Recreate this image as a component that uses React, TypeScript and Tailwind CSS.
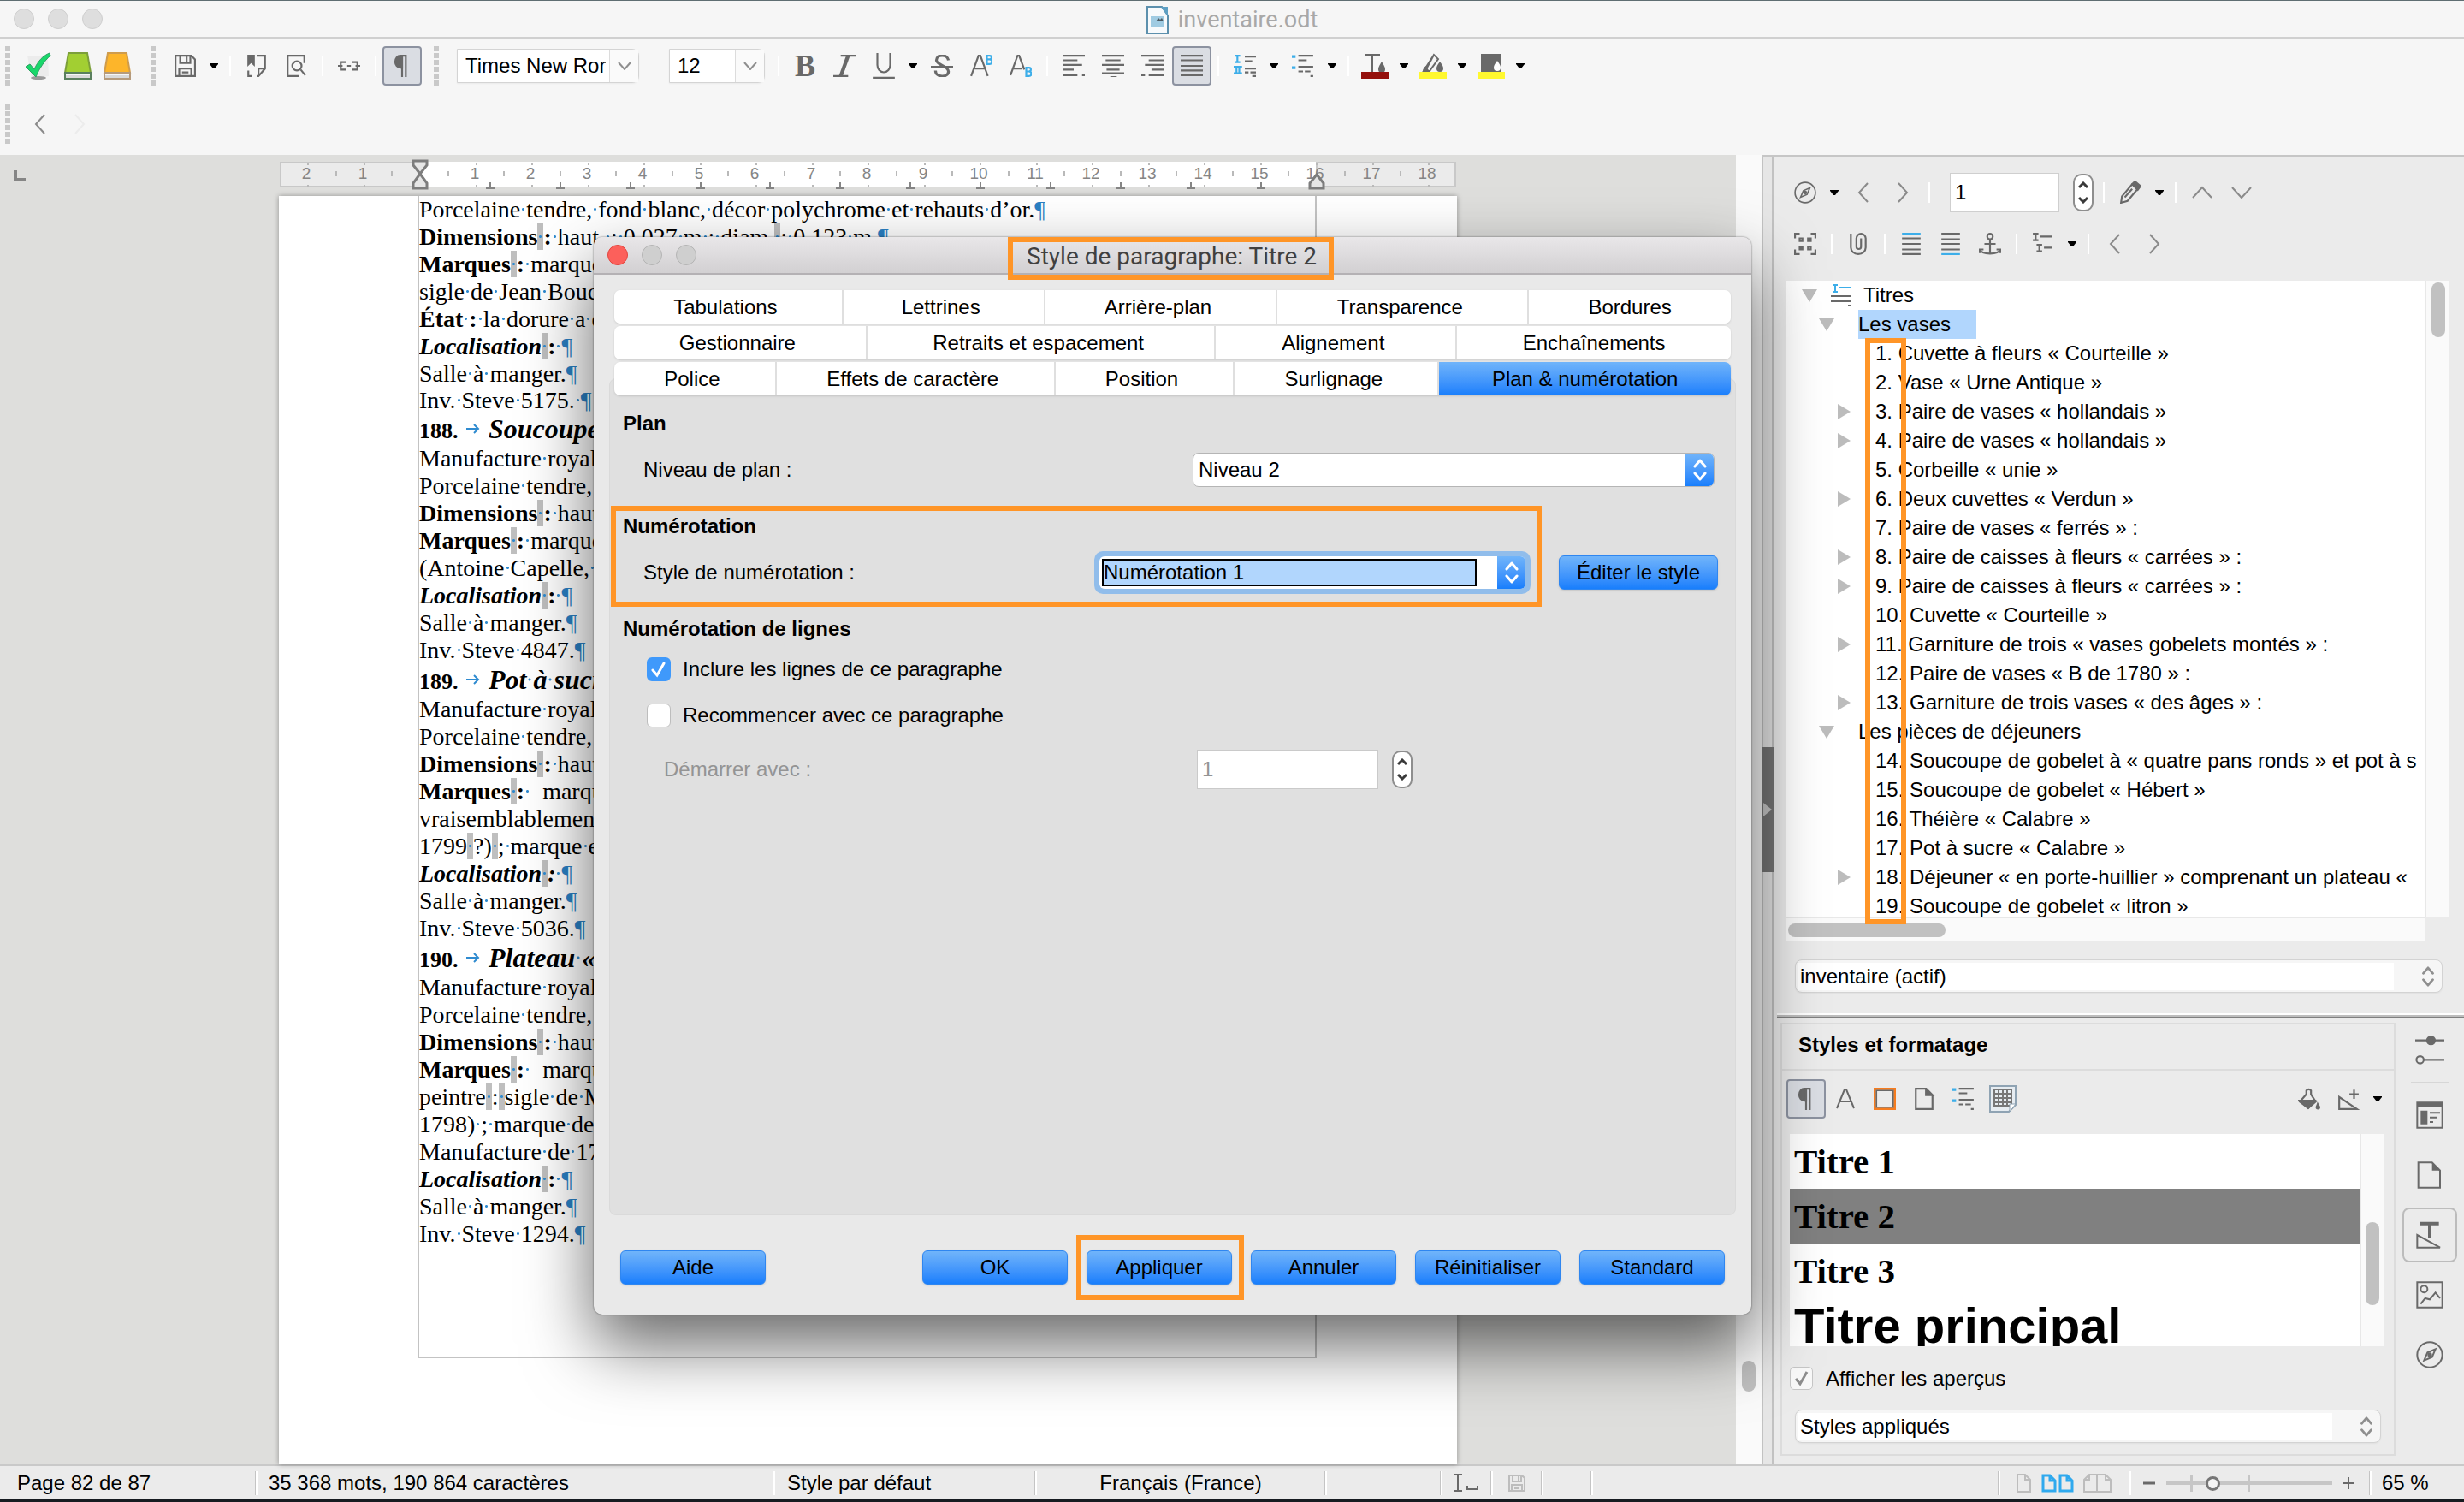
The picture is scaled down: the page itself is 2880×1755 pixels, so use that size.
import React, { type ReactNode } from "react";

const INK = "#696969";
const BLUE = "#3daee9";

/* ---------- small building blocks ---------- */

function Icon({ children, size = 26 }: { children: ReactNode; size?: number }) {
  return (
    <svg width={size} height={size} viewBox="0 0 24 24" fill="none" stroke={INK} strokeWidth="2" aria-hidden="true">
      {children}
    </svg>
  );
}

function Tool({ label, active, children }: { label: string; active?: boolean; children: ReactNode }) {
  return (
    <button
      type="button"
      aria-label={label}
      className={
        active
          ? "flex h-[46px] w-[46px] shrink-0 items-center justify-center rounded-[4px] border-2 border-[#8c92a0] bg-[#dadde3]"
          : "flex h-[46px] w-[46px] shrink-0 items-center justify-center"
      }
    >
      {children}
    </button>
  );
}

function Caret() {
  return (
    <button type="button" aria-label="Plus d’options" className="flex h-[46px] w-[22px] shrink-0 items-center justify-center">
      <svg width="10" height="6" viewBox="0 0 10 6" aria-hidden="true">
        <path d="M0 0h10v1L6 6H4L0 1z" fill="#000" />
      </svg>
    </button>
  );
}

function Sep() {
  return (
    <span className="flex w-[16px] shrink-0 justify-center">
      <span className="h-[24px] w-[2px] bg-white" />
    </span>
  );
}

function Handle({ className }: { className: string }) {
  return (
    <span className={className}>
      <svg width="6" height="46" viewBox="0 0 6 46" aria-hidden="true">
        {[0, 8, 16, 24, 32, 40].map((y) => (
          <rect key={y} x="0" y={y} width="6" height="6" fill="#c9c9c9" />
        ))}
      </svg>
    </span>
  );
}

function Chevron({ d, color = "#8a8a8a" }: { d: "left" | "right" | "up" | "down"; color?: string }) {
  const paths = {
    left: "M17 1 7 12l10 11",
    right: "M7 1l10 11L7 23",
    up: "M1 18 12 6l11 12",
    down: "M1 6l11 12L23 6",
  };
  return (
    <svg width="24" height="24" viewBox="0 0 24 24" fill="none" stroke={color} strokeWidth="2" aria-hidden="true">
      <path d={paths[d]} />
    </svg>
  );
}

function UpDown({ color, className }: { color: string; className?: string }) {
  return (
    <svg className={className} width="16" height="28" viewBox="0 0 16 28" fill="none" stroke={color} strokeWidth="3" strokeLinejoin="round" strokeLinecap="round" aria-hidden="true">
      <path d="M2 10l6-7 6 7M2 18l6 7 6-7" />
    </svg>
  );
}

function Spinner() {
  return (
    <button type="button" aria-label="Augmenter ou diminuer" className="flex h-[44px] w-[24px] items-center justify-center rounded-[10px] border-2 border-[#8e8e8e] bg-white">
      <svg width="12" height="26" viewBox="0 0 12 26" fill="none" stroke="#3a3a3a" strokeWidth="3" aria-hidden="true">
        <path d="M1 7l5-5 5 5M1 19l5 5 5-5" />
      </svg>
    </button>
  );
}

/* ---------- drawings ---------- */

const Pilcrow = () => (
  <Icon>
    <path d="M11 1h6M12 1v23M16 1v23" />
    <path d="M12 1H10a5 6 0 0 0 0 13h2z" fill={INK} />
  </Icon>
);
const Floppy = () => (
  <Icon>
    <path d="M2 1h17l4 4v18H2zM7 1v8h11V1M14 2v6M6 23v-8h13v8M9 19h7" />
  </Icon>
);
const PageIcon = ({ size = 26 }: { size?: number }) => (
  <Icon size={size}>
    <path d="M3 1h11l7 7v15H3z" />
    <path d="M14 1v7h7z" fill={INK} />
  </Icon>
);
const Lines = ({ d }: { d: string }) => (
  <Icon>
    <path d={d} />
  </Icon>
);
const Bullets = () => (
  <Icon>
    <path d="M7 1h16M7 6h9M7 13h16M7 18h5M14 18h6M20 23h3" />
    <path d="M0 2h4M0 14h4" stroke={BLUE} strokeWidth="3" />
  </Icon>
);
const NumList = () => (
  <Icon>
    <path d="M12 2h12M12 7h8M12 15h12M12 19h4M18 19h6M20 23h4" />
    <path d="M1 1h6M4 1v7M1 8h6M0 13h9M0 20h9M3 13v7M6 13v7" stroke={BLUE} />
  </Icon>
);
const Compass = ({ size = 26 }: { size?: number }) => (
  <Icon size={size}>
    <circle cx="12" cy="12" r="11" strokeWidth="1.5" />
    <path d="M17 7l-3 7-7 3 3-7z" strokeWidth="1.5" />
    <circle cx="12" cy="12" r="2" fill={INK} stroke="none" />
  </Icon>
);

/* ---------- title bar and toolbars ---------- */

function TitleBar() {
  return (
    <header className="flex h-[44px] items-center border-b-2 border-[#d0d0d0] bg-[#f6f6f6] px-[16px]">
      <div className="flex flex-1 gap-[16px]">
        {["Fermer", "Réduire", "Agrandir"].map((l) => (
          <button key={l} type="button" aria-label={l} className="h-[24px] w-[24px] rounded-full border border-[#cfcfcf] bg-[#dedede]" />
        ))}
      </div>
      <div className="flex items-center gap-[11px] pt-[2px]">
        <svg width="26" height="33" viewBox="0 0 26 33" aria-hidden="true">
          <path d="M1 1h17l7 10v21H1z" fill="#f7fafc" stroke="#5c90ad" strokeWidth="2" />
          <path d="M17 1h8v11z" fill="#5ea0c4" />
          <rect x="5" y="12" width="15" height="12" fill="#9fcbe2" />
          <path d="M11 18l3-4 2 2 2-2 2 4z" fill="#4c5a62" />
        </svg>
        <h1 className="font-[Roboto,sans-serif] text-[27px] leading-[32px] text-[#a8a8a8]">inventaire.odt</h1>
      </div>
      <div className="flex-1" />
    </header>
  );
}

function Combo({ label, value, className }: { label: string; value: string; className: string }) {
  return (
    <div className={className}>
      <input aria-label={label} defaultValue={value} className="h-full min-w-0 flex-1 bg-white pr-[4px] pl-[9px] text-[24px] outline-none" />
      <button type="button" aria-label={"Ouvrir " + label} className="flex w-[34px] items-center justify-center border-l border-[#dcdcdc] bg-[#fafafa]">
        <svg width="16" height="10" viewBox="0 0 16 10" fill="none" stroke="#8f8f8f" strokeWidth="2" aria-hidden="true">
          <path d="M1 1l7 8 7-8" />
        </svg>
      </button>
    </div>
  );
}

function Toolbars() {
  return (
    <div className="bg-[#f6f6f6]">
      <div className="flex h-[64px] items-center">
        <Handle className="flex w-[22px] shrink-0 pl-[6px]" />
        <Tool label="Vérifier">
          <svg width="34" height="34" viewBox="0 0 34 34" aria-hidden="true">
            <path d="M4 5l24 1 1 23-20 3z" fill="#ececec" />
            <ellipse cx="17" cy="31" rx="9" ry="2" fill="#9a9a9a" />
            <path d="M2 18l5-3 5 6C16 12 22 5 30 2l1 3C24 11 18 20 14 30z" fill="#19d76a" stroke="#2e9f64" />
          </svg>
        </Tool>
        {[
          ["#a2cf32", "#7c9f3a", "#5a7f5e"],
          ["#fdb52a", "#cf9c4c", "#b59a7b"],
        ].map(([fill, edge, base]) => (
          <Tool key={fill} label="Dictionnaire">
            <svg width="34" height="34" viewBox="0 0 34 34" aria-hidden="true">
              <path d="M6 2h22l4 23H2z" fill={fill} stroke={edge} strokeWidth="2" />
              <path d="M2 25h30v7H2z" fill="#d9d9d9" stroke={base} strokeWidth="2" />
              <path d="M3 27h28" stroke="#f6f6f6" strokeWidth="2" />
            </svg>
          </Tool>
        ))}
        <Handle className="flex w-[33px] shrink-0 pl-[16px]" />
        <Tool label="Enregistrer"><Floppy /></Tool>
        <Caret />
        <Sep />
        <Tool label="Exporter en PDF">
          <Icon>
            <path d="M12 1h9v14l-7 8h-2M7 23H3v-6M14 23v-8h7" />
            <path d="M2 0h8v13l-4-4-4 4z" fill={INK} stroke="none" />
          </Icon>
        </Tool>
        <Tool label="Aperçu">
          <Icon>
            <path d="M21 9V1H3v22h12" />
            <circle cx="13" cy="12" r="5" />
            <path d="M17 16l5 6" />
          </Icon>
        </Tool>
        <Sep />
        <Tool label="Hyperlien">
          <Icon>
            <path d="M9 8H3v3M9 16H3v-3M15 8h6v3M15 16h6v-3M0 12h5M19 12h5M10 12h4" />
          </Icon>
        </Tool>
        <Sep />
        <Tool label="Marques de formatage" active><Pilcrow /></Tool>
        <Handle className="flex w-[41px] shrink-0 pl-[14px]" />
        <Combo label="Nom de police" value="Times New Roman" className="flex h-[40px] w-[213px] rounded-r-[8px] border border-[#d4d4d4] bg-white shadow-xs" />
        <Combo label="Taille de police" value="12" className="ml-[35px] flex h-[40px] w-[112px] rounded-r-[8px] border border-[#d4d4d4] bg-white shadow-xs" />
        <span className="w-[8px]" />
        <Sep />
        <Tool label="Gras">
          <span className="font-['Liberation_Serif',serif] text-[36px] leading-[36px] font-bold text-[#696969]">B</span>
        </Tool>
        <Tool label="Italique">
          <Icon><path d="M8 1h16M0 23h16" strokeWidth="2" /><path d="M16 1 8 23" strokeWidth="4" /></Icon>
        </Tool>
        <Tool label="Souligné">
          <svg width="26" height="30" viewBox="0 0 24 28" fill="none" stroke={INK} strokeWidth="2" aria-hidden="true">
            <path d="M5 0v13a7 8 0 0 0 14 0V0M0 27h24" />
          </svg>
        </Tool>
        <Caret />
        <Tool label="Barré">
          <Icon><path d="M19 6c-1-7-13-7-13 0 0 5 13 6 13 12 0 7-14 7-14-1" strokeWidth="3" /><path d="M0 13h24" /></Icon>
        </Tool>
        <Tool label="Exposant">
          <Icon>
            <path d="M1 23 9 1h2l8 22M4 15h12" />
            <path d="M18 1h3a2 2 0 0 1 0 4 2 2 0 0 1 0 5h-3zM18 5h3" stroke={BLUE} />
          </Icon>
        </Tool>
        <Tool label="Indice">
          <Icon>
            <path d="M1 22 9 0h1l6 16M4 15h10" />
            <path d="M18 14h3a2 2 0 0 1 0 4 2 2 0 0 1 0 5h-3zM18 18h3" stroke={BLUE} />
          </Icon>
        </Tool>
        <Sep />
        <Tool label="Aligner à gauche"><Lines d="M0 1h24M0 6h16M0 11h21M0 16h12M0 22h16M21 22h3" /></Tool>
        <Tool label="Centrer"><Lines d="M0 1h24M4 6h16M0 11h24M5 16h14M0 20h24M9 24h7" /></Tool>
        <Tool label="Aligner à droite"><Lines d="M0 1h24M8 6h16M4 11h20M11 16h13M0 22h4M8 22h16" /></Tool>
        <Tool label="Justifier" active><Lines d="M0 1h24M0 6h24M0 12h24M0 17h24M0 22h24" /></Tool>
        <Sep />
        <Tool label="Numérotation"><NumList /></Tool>
        <Caret />
        <Tool label="Puces"><Bullets /></Tool>
        <Caret />
        <Sep />
        <Tool label="Couleur de police">
          <svg width="32" height="30" viewBox="0 0 32 30" aria-hidden="true">
            <path d="M4 2h18M13 2v20" stroke={INK} strokeWidth="2" />
            <path d="M24 10c3 5 4 7 4 9a4 4 0 0 1-8 0c0-2 1-4 4-9z" fill={INK} />
            <path d="M0 22h32v8H0z" fill="#94100c" />
          </svg>
        </Tool>
        <Caret />
        <Tool label="Surlignage">
          <svg width="32" height="30" viewBox="0 0 32 30" aria-hidden="true">
            <path d="M5 21 17 2l5 5-10 14zM17 2l-9 17" fill="none" stroke={INK} strokeWidth="2" />
            <path d="M4 22c0-4 2-6 4-7l4 7zM24 10c3 4 4 6 4 8a4 4 0 0 1-8 0c0-2 1-4 4-8z" fill={INK} />
            <path d="M0 22h32v8H0z" fill="#fff82f" />
          </svg>
        </Tool>
        <Caret />
        <Tool label="Couleur d’arrière-plan">
          <svg width="32" height="30" viewBox="0 0 32 30" aria-hidden="true">
            <path d="M4 1h24v21H4z" fill={INK} />
            <path d="M23 9c3 4 4 6 4 8a4 4 0 0 1-8 0c0-2 1-4 4-8z" fill="#fff" />
            <path d="M0 22h32v8H0z" fill="#fff82f" />
          </svg>
        </Tool>
        <Caret />
      </div>
      <div className="flex h-[72px] items-center">
        <Handle className="flex w-[24px] shrink-0 pl-[6px]" />
        <Tool label="Précédent"><Chevron d="left" /></Tool>
        <Tool label="Suivant"><Chevron d="right" color="#ececec" /></Tool>
      </div>
    </div>
  );
}

/* ---------- ruler and document ---------- */

function Ruler() {
  const x = (cm: number) => Math.round(165 + cm * 65.5);
  const labels = [-2, -1, ...Array.from({ length: 18 }, (_, i) => i + 1)];
  return (
    <svg width="1377" height="48" viewBox="0 0 1377 48" className="mx-auto block" aria-hidden="true">
      <path d="M165 8h1048v30H165z" fill="#fff" />
      <path d="M2 9h162v28H2zM1213 9h162v28h-162z" fill="#ebebeb" stroke="#c8c8c8" strokeWidth="2" />
      {labels.map((n) => (
        <g key={n}>
          <path d={`M${x(n)} 9v3M${x(n)} 35v3M${x(n < 0 ? n + 0.5 : n - 0.5)} 19v6`} stroke="#b9b9b9" strokeWidth="2" />
          <text x={x(n) - 2} y="28" textAnchor="middle" fontSize="19" fill="#858585" fontFamily="Liberation Sans, sans-serif">
            {Math.abs(n)}
          </text>
        </g>
      ))}
      {Array.from({ length: 12 }, (_, i) => (
        <path key={i} d={`M${x((i + 1) * 1.25)} 32v7M${x((i + 1) * 1.25) - 5} 39h10`} stroke="#858585" strokeWidth="2" />
      ))}
      <path d="M157 7h16v5l-8 10-8-10zM157 39h16v-6l-8-11-8 11zM1205 39h16v-6l-8-10-8 10z" fill="#e6e6e6" stroke="#7d7d7d" strokeWidth="3" />
    </svg>
  );
}

/* "·" is a marked space, "~" a marked non-breaking space, "¶" a paragraph end. */
function Marks({ text }: { text: string }) {
  return (
    <>
      {text.split(/([·~¶])/).map((part, i) => {
        if (part === "~")
          return <span key={i} className="bg-[#bfbfbf] bg-[radial-gradient(circle,#2f8bd0_1px,transparent_2px)]">{"\u00a0"}</span>;
        if (part === "·")
          return <span key={i} className="bg-[radial-gradient(circle,#2f8bd0_1px,transparent_2px)]"> </span>;
        if (part === "¶") return <span key={i} className="font-normal text-[#2a80c4] not-italic">¶</span>;
        return <React.Fragment key={i}>{part}</React.Fragment>;
      })}
    </>
  );
}

type Line = { n?: string; b?: string; i?: string; t?: string };

const paragraphs: Line[] = [
  { t: "Porcelaine·tendre,·fond·blanc,·décor·polychrome·et·rehauts·d’or.¶" },
  { b: "Dimensions~:", t: "·haut.·:·0,027·m·;·diam.~:·0,123·m.¶" },
  { b: "Marques~:", t: "·marque" },
  { t: "sigle·de·Jean·Boucher" },
  { b: "État·:", t: "·la·dorure·a·été" },
  { i: "Localisation~", b: ":·¶" },
  { t: "Salle·à·manger.¶" },
  { t: "Inv.·Steve·5175.·¶" },
  { n: "188.", t: "Soucoupe" },
  { t: "Manufacture·royale" },
  { t: "Porcelaine·tendre,·" },
  { b: "Dimensions~:", t: "·haut" },
  { b: "Marques~:", t: "·marque" },
  { t: "(Antoine·Capelle,·" },
  { i: "Localisation~", b: ":·¶" },
  { t: "Salle·à·manger.¶" },
  { t: "Inv.·Steve·4847.¶" },
  { n: "189.", t: "Pot·à·sucre" },
  { t: "Manufacture·royale" },
  { t: "Porcelaine·tendre,·" },
  { b: "Dimensions~:", t: "·haut" },
  { b: "Marques~:", t: "·  marque" },
  { t: "vraisemblablement" },
  { t: "1799~?)~;·marque·en" },
  { i: "Localisation~:", b: "·¶" },
  { t: "Salle·à·manger.¶" },
  { t: "Inv.·Steve·5036.¶" },
  { n: "190.", t: "Plateau·«" },
  { t: "Manufacture·royale" },
  { t: "Porcelaine·tendre,·" },
  { b: "Dimensions~:", t: "·haut" },
  { b: "Marques~:", t: "·  marque" },
  { t: "peintre~:~sigle·de·M" },
  { t: "1798)·;·marque·de" },
  { t: "Manufacture·de·1789" },
  { i: "Localisation~", b: ":·¶" },
  { t: "Salle·à·manger.¶" },
  { t: "Inv.·Steve·1294.¶" },
];

function Document() {
  return (
    <div className="flex min-w-0 flex-1">
      <div className="relative flex min-w-0 flex-1 flex-col bg-[#dededc]">
        <svg width="16" height="14" viewBox="0 0 16 14" className="absolute top-[18px] left-[16px]" aria-hidden="true">
          <path d="M2 0v11h12" fill="none" stroke="#858585" strokeWidth="4" />
        </svg>
        <div className="h-[48px]">
          <Ruler />
        </div>
        <main className="mx-auto w-[1377px] flex-1 bg-white shadow-[0_0_6px_rgba(0,0,0,0.35)]">
          <div className="mr-[164px] ml-[162px] overflow-hidden border-x-2 border-b-2 border-[#c3c3c3] pb-[127px] font-['Liberation_Serif',serif] text-[28px] leading-[32px] whitespace-pre">
            {paragraphs.map((l, k) =>
              l.n ? (
                <h2 key={k} className="flex h-[37px] items-baseline font-bold">
                  <span className="w-[55px] text-[26px]">{l.n}</span>
                  <svg width="16" height="14" viewBox="0 0 16 14" fill="none" stroke="#2f8bd0" strokeWidth="2" className="mr-[10px] self-center" aria-hidden="true">
                    <path d="M0 6h14M9 1l5 5-5 5" />
                  </svg>
                  <span className="text-[32px] leading-[37px] italic"><Marks text={l.t ?? ""} /></span>
                </h2>
              ) : (
                <p key={k} className={k === 7 ? "h-[30px] leading-[30px]" : "h-[32px]"}>
                  {l.i && <b className="italic"><Marks text={l.i} /></b>}
                  {l.b && <b><Marks text={l.b} /></b>}
                  {l.t && <Marks text={l.t} />}
                </p>
              ),
            )}
          </div>
        </main>
      </div>
      <div className="flex w-[30px] shrink-0 flex-col items-center bg-[#fafafa]">
        <span className="mt-auto mb-[85px] h-[36px] w-[16px] rounded-full bg-[#c1c1c1]" />
      </div>
    </div>
  );
}

/* ---------- navigator ---------- */

type Row = { text: string; level: 1 | 2; more?: boolean };

const rows: Row[] = [
  { text: "Les vases", level: 1 },
  { text: "1. Cuvette à fleurs « Courteille »", level: 2 },
  { text: "2. Vase « Urne Antique »", level: 2 },
  { text: "3. Paire de vases « hollandais »", level: 2, more: true },
  { text: "4. Paire de vases « hollandais »", level: 2, more: true },
  { text: "5. Corbeille « unie »", level: 2 },
  { text: "6. Deux cuvettes « Verdun »", level: 2, more: true },
  { text: "7. Paire de vases « ferrés » :", level: 2 },
  { text: "8. Paire de caisses à fleurs « carrées » :", level: 2, more: true },
  { text: "9. Paire de caisses à fleurs « carrées » :", level: 2, more: true },
  { text: "10. Cuvette « Courteille »", level: 2 },
  { text: "11. Garniture de trois « vases gobelets montés » :", level: 2, more: true },
  { text: "12. Paire de vases « B de 1780 » :", level: 2 },
  { text: "13. Garniture de trois vases « des âges » :", level: 2, more: true },
  { text: "Les pièces de déjeuners", level: 1 },
  { text: "14. Soucoupe de gobelet à « quatre pans ronds » et pot à s", level: 2 },
  { text: "15. Soucoupe de gobelet « Hébert »", level: 2 },
  { text: "16. Théière « Calabre »", level: 2 },
  { text: "17. Pot à sucre « Calabre »", level: 2 },
  { text: "18. Déjeuner « en porte-huillier » comprenant un plateau «", level: 2, more: true },
  { text: "19. Soucoupe de gobelet « litron »", level: 2 },
];

const DownTri = () => (
  <svg width="18" height="15" viewBox="0 0 18 15" aria-hidden="true"><path d="M0 0h18L9 15z" fill="#bcbcbc" /></svg>
);
const RightTri = () => (
  <svg width="15" height="18" viewBox="0 0 15 18" aria-hidden="true"><path d="M0 0v18l15-9z" fill="#bcbcbc" /></svg>
);

function Tree() {
  return (
    <div className="relative mt-[20px] mr-[18px] ml-[15px] grid grid-cols-[1fr_28px]">
      <ul className="h-[743px] overflow-hidden bg-white text-[24px] leading-[34px] whitespace-nowrap">
        <li className="flex h-[34px] items-center pl-[18px]">
          <span className="w-[34px]"><DownTri /></span>
          <svg width="24" height="26" viewBox="0 0 24 26" fill="none" stroke={INK} strokeWidth="2" aria-hidden="true">
            <path d="M0 14h24M0 20h24M20 25h4" />
            <path d="M2 1h6M5 1v8M2 9h6M10 4h14" stroke={BLUE} />
          </svg>
          <span className="pl-[14px]">Titres</span>
        </li>
        {rows.map((r, i) =>
          r.level === 1 ? (
            <li key={i} className="flex h-[34px] items-center pl-[38px]">
              <span className="w-[46px]"><DownTri /></span>
              <span className={i === 0 ? "bg-[#b1d6fd] pr-[30px]" : ""}>{r.text}</span>
            </li>
          ) : (
            <li key={i} className="flex h-[34px] items-center pl-[60px]">
              <span className="w-[44px] shrink-0">{r.more && <RightTri />}</span>
              <span>{r.text}</span>
            </li>
          ),
        )}
      </ul>
      <div className="border-l-2 border-[#e8e8e8] bg-[#fafafa] px-[6px] pt-[2px]">
        <span className="block h-[64px] w-[16px] rounded-full bg-[#c1c1c1]" />
      </div>
      <div className="h-[28px] border-t-2 border-[#e8e8e8] bg-[#fafafa] px-[2px] pt-[6px]">
        <span className="block h-[16px] w-[184px] rounded-full bg-[#c1c1c1]" />
      </div>
      <span className="pointer-events-none absolute top-[67px] left-[92px] h-[685px] w-[48px] border-[6px] border-[#ff9527]" />
    </div>
  );
}

function PlainSelect({ id, value, label, className }: { id: string; value: string; label: string; className: string }) {
  return (
    <div className={className}>
      <select id={id} aria-label={label} className="h-[32px] flex-1 appearance-none bg-white pl-[2px] text-[24px] leading-[32px] outline-none">
        <option>{value}</option>
      </select>
      <span className="w-[32px]" />
      <UpDown color="#8f8f8f" className="h-[26px]" />
    </div>
  );
}

function Navigator() {
  return (
    <section aria-label="Navigateur" className="flex flex-col pt-[19px]">
      <div className="flex h-[46px] items-center pl-[14px]">
        <Tool label="Naviguer par"><Compass /></Tool>
        <Caret />
        <Tool label="Page précédente"><Chevron d="left" /></Tool>
        <Tool label="Page suivante"><Chevron d="right" /></Tool>
        <Sep />
        <input aria-label="Numéro de page" defaultValue="1" className="ml-[16px] h-[46px] w-[128px] border border-[#cfcfcf] bg-white pl-[5px] text-[24px] outline-none" />
        <span className="ml-[16px] flex"><Spinner /></span>
        <span className="ml-[4px] flex"><Sep /></span>
        <Tool label="Rappel">
          <Icon><path d="M3 16 14 3l6 5L9 21l-7 2z" /><path d="M14 3l3-3 6 5-3 4z" fill={INK} /><path d="M6 17l8-9" /></Icon>
        </Tool>
        <Caret />
        <Sep />
        <Tool label="Monter"><Chevron d="up" /></Tool>
        <Tool label="Descendre"><Chevron d="down" /></Tool>
      </div>
      <div className="mt-[14px] flex h-[46px] items-center pl-[14px]">
        <Tool label="Affichage du contenu">
          <Icon>
            <path d="M1 6V1h5M18 1h5v5M23 18v5h-5M6 23H1v-5M6 6h3v3H6zM15 15h3v3h-3z" />
            <path d="M14 5h5v5h-5zM5 14h5v5H5z" fill={INK} stroke="none" />
          </Icon>
        </Tool>
        <Sep />
        <Tool label="Annexe">
          <Icon><path d="M4 1v15a8 7 0 0 0 16 0V6a5 5 0 0 0-10 0v9a2 2 0 0 0 5 0V6" /></Icon>
        </Tool>
        <Sep />
        <Tool label="En-tête"><Icon><path d="M2 6h20M2 12h20M2 18h20M2 23h20" /><path d="M2 1h20" stroke={BLUE} /></Icon></Tool>
        <Tool label="Pied de page"><Icon><path d="M2 1h20M2 7h20M2 12h20M2 18h20" /><path d="M2 23h20" stroke={BLUE} /></Icon></Tool>
        <Tool label="Ancre">
          <Icon><circle cx="12" cy="4" r="3" /><path d="M12 7v15M6 12h12M1 18c2 6 20 6 22 0M1 22v-4h4M23 22v-4h-4" /></Icon>
        </Tool>
        <Sep />
        <Tool label="Niveaux de titres">
          <Icon><path d="M1 1h6M4 1v7M1 8h6M9 4h13M5 13h6M8 13v7M5 20h6M13 16h9" /></Icon>
        </Tool>
        <Caret />
        <Sep />
        <Tool label="Hausser"><Chevron d="left" /></Tool>
        <Tool label="Abaisser"><Chevron d="right" /></Tool>
      </div>
      <Tree />
      <PlainSelect id="doc" label="Document" value="inventaire (actif)" className="mt-[22px] mr-[25px] ml-[25px] flex h-[39px] items-center rounded-[8px] border border-[#d3d3d3] bg-[#f6f6f6] pr-[8px] pl-[3px] shadow-xs" />
    </section>
  );
}

/* ---------- styles panel ---------- */

function Styles() {
  return (
    <section aria-label="Styles et formatage" className="ml-[8px] min-w-0 flex-1 border-2 border-[#dcdcdc]">
      <h2 className="flex h-[54px] items-center border-b-2 border-[#dcdcdc] pb-[4px] pl-[19px] text-[24px] font-bold">Styles et formatage</h2>
      <div className="mt-[10px] flex h-[46px] items-center pr-[8px] pl-[5px]">
        <Tool label="Styles de paragraphe" active><Pilcrow /></Tool>
        <Tool label="Styles de caractère"><Icon size={24}><path d="M2 23 11 1h2l9 22M6 15h12" /></Icon></Tool>
        <Tool label="Styles de cadre">
          <Icon><path d="M1 1h22v22H1z" stroke="#f67c1f" strokeWidth="3" /><path d="M3 3h18v18H3z" strokeWidth="1.5" /></Icon>
        </Tool>
        <Tool label="Styles de page"><PageIcon /></Tool>
        <Tool label="Styles de liste"><Bullets /></Tool>
        <Tool label="Styles de tableau">
          <svg width="32" height="32" viewBox="0 0 32 32" fill="none" aria-hidden="true">
            <path d="M1 1h30v22l-8 8H1z" fill="#e6ecf1" stroke="#8fa3b3" strokeWidth="2" />
            <path d="M6 5h20v19H6zM6 10h20M6 15h20M6 20h20M11 5v19M16 5v19M21 5v19" stroke="#777" strokeWidth="2" />
            <path d="M31 22h-7v9z" fill="#fff" stroke="#8fa3b3" />
          </svg>
        </Tool>
        <span className="flex-1" />
        <Tool label="Mode Tout remplir">
          <Icon><path d="M9 7V3a3 3 0 0 1 5 0v4l5 8-8 7-9-7z" /><path d="M2 14h16l-7 8z" fill={INK} /><path d="M21 15c2 4 3 5 3 6a2 2 0 0 1-5 0c0-1 1-2 2-6z" fill={INK} stroke="none" /></Icon>
        </Tool>
        <Tool label="Nouveau style"><Icon><path d="M2 10v13h19zM18 2v10M13 7h10" /></Icon></Tool>
        <Caret />
      </div>
      <div className="mt-[18px] mr-[12px] ml-[9px] grid grid-cols-[1fr_28px]">
        <ul className="h-[248px] overflow-hidden bg-white font-['Liberation_Serif',serif] text-[41px] leading-[64px] font-bold">
          <li className="pl-[5px]">Titre 1</li>
          <li className="bg-[#808080] pl-[5px]">Titre 2</li>
          <li className="pl-[5px]">Titre 3</li>
          <li className="pl-[5px] font-['Liberation_Sans',sans-serif] text-[58px]">Titre principal</li>
        </ul>
        <div className="flex items-start justify-center border-l-2 border-[#e8e8e8] bg-[#fafafa] pt-[103px]">
          <span className="h-[97px] w-[16px] rounded-full bg-[#c1c1c1]" />
        </div>
      </div>
      <label className="mt-[24px] ml-[9px] flex h-[27px] items-center gap-[15px] text-[24px]">
        <span className="relative flex h-[27px] w-[27px]">
          <input type="checkbox" defaultChecked className="h-[27px] w-[27px] appearance-none rounded-[5px] border border-[#c6c6c6] bg-[#f8f8f8]" />
          <svg width="27" height="27" viewBox="0 0 27 27" className="pointer-events-none absolute inset-0" fill="none" stroke="#8d8d8d" strokeWidth="3" aria-hidden="true">
            <path d="M7 14l5 6 8-14" />
          </svg>
        </span>
        Afficher les aperçus
      </label>
      <PlainSelect id="filter" label="Filtre des styles" value="Styles appliqués" className="mt-[23px] mr-[15px] mb-[13px] ml-[15px] flex h-[39px] items-center rounded-[8px] border border-[#d3d3d3] bg-[#f6f6f6] pr-[8px] pl-[3px] shadow-xs" />
    </section>
  );
}

function TabColumn() {
  const btn = "flex h-[64px] w-[64px] items-center justify-center";
  return (
    <nav aria-label="Panneaux" className="flex w-[80px] shrink-0 flex-col items-center">
      <button type="button" aria-label="Paramètres" className={btn}>
        <Icon size={34}><path d="M0 4h24M7 20h17" strokeWidth="1.5" /><circle cx="13" cy="4" r="3" fill={INK} /><circle cx="4" cy="20" r="3" strokeWidth="1.5" /></Icon>
      </button>
      <span className="mt-[5px] h-[2px] w-[44px] bg-[#d6d6d6]" />
      <div className="mt-[5px] flex flex-col gap-[6px]">
        <button type="button" aria-label="Propriétés" className={btn}>
          <Icon size={32}><path d="M1 1h22v22H1z" strokeWidth="1.5" /><path d="M1 1h22v4H1zM4 8h6v12H4z" fill={INK} stroke="none" /><path d="M12 10h9M12 14h6M12 18h3" strokeWidth="1.5" /></Icon>
        </button>
        <button type="button" aria-label="Page" className={btn}>
          <Icon size={32}><path d="M2 1h12l7 7v15H2z" strokeWidth="1.5" /><path d="M14 1v7h7z" fill={INK} stroke="none" /></Icon>
        </button>
        <button type="button" aria-label="Styles" className="flex h-[64px] w-[64px] items-center justify-center rounded-[8px] border-2 border-[#bcbcbc]">
          <Icon size={32}><path d="M3 2h17M12 2v13" strokeWidth="3" /><path d="M1 12v11h20z" strokeWidth="1.5" /></Icon>
        </button>
        <button type="button" aria-label="Galerie" className={btn}>
          <Icon size={32}><path d="M1 1h22v22H1zM4 20l4-5 4 1 5-6 4 5" strokeWidth="1.5" /><circle cx="7" cy="7" r="3" strokeWidth="1.5" /></Icon>
        </button>
        <button type="button" aria-label="Navigateur" className={btn}><Compass size={32} /></button>
      </div>
    </nav>
  );
}

function Sidebar() {
  return (
    <aside className="flex w-[821px] shrink-0 border-t-2 border-[#c6c6c6]">
      <div className="relative w-[14px] shrink-0 border-x-2 border-[#c2c2c2] bg-[#e6e6e6]">
        <button type="button" aria-label="Masquer le volet" className="absolute top-[690px] -left-[2px] flex h-[146px] w-[14px] items-center justify-center bg-[#767676]">
          <svg width="10" height="16" viewBox="0 0 10 16" aria-hidden="true"><path d="M0 0v16l10-8z" fill="#c8c8c8" /></svg>
        </button>
      </div>
      <div className="flex min-w-0 flex-1 flex-col bg-[#ebebeb] pb-[8px]">
        <Navigator />
        <div className="mt-[24px] ml-[4px] h-[6px] border-t-2 border-b-2 border-t-white border-b-[#808080] bg-[#bdbdbd]" />
        <div className="mt-[5px] flex">
          <Styles />
          <TabColumn />
        </div>
      </div>
    </aside>
  );
}

/* ---------- status bar ---------- */

function Bar() {
  return <span className="h-[28px] w-[3px] shrink-0 border-l border-l-[#c4c4c4] bg-white" />;
}

function StatusBar() {
  return (
    <footer className="flex h-[40px] items-center border-t-2 border-[#c9c9c9] bg-[#ebebeb] pt-[2px] text-[24px]">
      <span className="w-[298px] pl-[20px]">Page 82 de 87</span>
      <Bar />
      <span className="w-[602px] pl-[13px]">35 368 mots, 190 864 caractères</span>
      <Bar />
      <span className="w-[303px] pl-[14px]">Style par défaut</span>
      <Bar />
      <span className="w-[336px] text-center">Français (France)</span>
      <Bar />
      <span className="w-[132px]" />
      <Bar />
      <span className="flex w-[56px] justify-center">
        <svg width="30" height="24" viewBox="0 0 30 24" fill="none" stroke={INK} strokeWidth="2" aria-hidden="true">
          <path d="M0 2h10M5 2v19M0 21h10M16 15v4h12v-4" />
        </svg>
      </span>
      <Bar />
      <span className="flex w-[56px] justify-center">
        <svg width="20" height="20" viewBox="0 0 20 20" fill="none" stroke="#bdbdbd" strokeWidth="2" aria-hidden="true">
          <path d="M1 1h15l3 3v15H1zM5 1v7h10V1M12 2v5M4 19v-7h12v7M7 16h6" />
        </svg>
      </span>
      <Bar />
      <span className="w-[55px]" />
      <Bar />
      <span className="flex-1" />
      <Bar />
      <span className="flex w-[150px] items-center justify-center gap-[11px]">
        <svg width="18" height="22" viewBox="0 0 18 22" fill="none" stroke="#bdbdbd" strokeWidth="2" aria-hidden="true">
          <path d="M1 1h9l6 6v14H1zM10 1v6h6" />
        </svg>
        <svg width="38" height="22" viewBox="0 0 38 22" fill="none" stroke="#2fa9ee" strokeWidth="3" aria-hidden="true">
          <path d="M2 2h8l6 6v12H2zM10 2v6h6M22 2h8l6 6v12H22zM30 2v6h6" />
        </svg>
        <svg width="34" height="22" viewBox="0 0 34 22" fill="none" stroke="#bdbdbd" strokeWidth="2" aria-hidden="true">
          <path d="M16 1H7L1 7v14h15zM16 1h10l6 6v14H16zM7 1v6H1M26 1v6h6" />
        </svg>
      </span>
      <Bar />
      <button type="button" aria-label="Zoom arrière" className="ml-[13px] flex w-[16px]">
        <svg width="16" height="16" viewBox="0 0 16 16" stroke={INK} strokeWidth="3" aria-hidden="true"><path d="M1 8h14" /></svg>
      </button>
      <span className="relative ml-[12px] flex h-[28px] w-[194px] items-center">
        <span className="absolute top-[4px] left-[28px] h-[20px] w-[3px] bg-[#c6c6c6]" />
        <span className="absolute top-[4px] left-[95px] h-[20px] w-[3px] bg-[#c6c6c6]" />
        <input
          type="range"
          aria-label="Zoom"
          defaultValue="26"
          className="relative h-[4px] w-full appearance-none bg-[#c6c6c6] [&::-webkit-slider-thumb]:h-[17px] [&::-webkit-slider-thumb]:w-[17px] [&::-webkit-slider-thumb]:appearance-none [&::-webkit-slider-thumb]:rounded-full [&::-webkit-slider-thumb]:border-[3px] [&::-webkit-slider-thumb]:border-[#767676] [&::-webkit-slider-thumb]:bg-[#f4f4f4]"
        />
      </span>
      <button type="button" aria-label="Zoom avant" className="ml-[11px] flex w-[16px]">
        <svg width="16" height="16" viewBox="0 0 16 16" stroke={INK} strokeWidth="2" aria-hidden="true"><path d="M1 8h14M8 1v14" /></svg>
      </button>
      <span className="ml-[16px] flex"><Bar /></span>
      <span className="w-[108px] pl-[12px]">65 %</span>
    </footer>
  );
}

/* ---------- dialog ---------- */

const blueButton =
  "h-[40px] rounded-[6px] border border-[#2f86f0] bg-linear-to-b from-[#70b4fa] to-[#177efc] text-[24px] leading-[36px] shadow-sm";

function Tabs({ names, className, selected }: { names: string[]; className: string; selected?: string }) {
  return (
    <div className={className}>
      {names.map((n) => (
        <button
          key={n}
          type="button"
          role="tab"
          aria-selected={n === selected}
          className={
            n === selected
              ? "bg-linear-to-b from-[#70b4fa] to-[#177efc]"
              : "border-r-2 border-[#dfdfdf] bg-white pr-[6px] last:border-r-0 last:pr-0"
          }
        >
          {n}
        </button>
      ))}
    </div>
  );
}

function BlueArrows() {
  return (
    <span className="pointer-events-none flex w-[33px] shrink-0 items-center justify-center rounded-r-[6px] bg-linear-to-b from-[#70b4fa] to-[#177efc]">
      <UpDown color="#fff" />
    </span>
  );
}

function Dialog() {
  return (
    <div
      role="dialog"
      aria-labelledby="dialog-title"
      className="absolute top-[276px] left-[694px] w-[1353px] rounded-[10px] bg-[#e9e9e9] text-[24px] shadow-[0_0_2px_rgba(0,0,0,0.6),0_36px_80px_rgba(0,0,0,0.6)]"
    >
      <div className="relative flex h-[44px] items-center rounded-t-[10px] border-b-2 border-[#b4b1b4] bg-linear-to-b from-[#e9e7e9] to-[#d2d0d2] px-[16px]">
        <div className="flex flex-1 gap-[16px]">
          <button type="button" aria-label="Fermer la boîte" className="h-[24px] w-[24px] rounded-full border border-[#e2463f] bg-[#fc605b]" />
          <button type="button" aria-label="Réduire la boîte" className="h-[24px] w-[24px] rounded-full border border-[#b4b4b4] bg-[#cfcfcf]" />
          <button type="button" aria-label="Agrandir la boîte" className="h-[24px] w-[24px] rounded-full border border-[#b4b4b4] bg-[#cfcfcf]" />
        </div>
        <h2 id="dialog-title" className="pt-[4px] font-[Roboto,sans-serif] text-[28px] leading-[32px] text-[#404040]">Style de paragraphe: Titre 2</h2>
        <span className="flex-1 pr-[2px]" />
        <span className="pointer-events-none absolute top-0 left-[484px] h-[50px] w-[381px] border-[6px] border-[#ff9527]" />
      </div>

      <div role="tablist" className="relative z-10 mx-[24px] mt-[18px] flex flex-col gap-[3px]">
        <Tabs
          names={["Tabulations", "Lettrines", "Arrière-plan", "Transparence", "Bordures"]}
          className="grid h-[39px] grid-cols-[268fr_236fr_272fr_294fr_236fr] overflow-hidden rounded-[7px] shadow-sm"
        />
        <Tabs
          names={["Gestionnaire", "Retraits et espacement", "Alignement", "Enchaînements"]}
          className="grid h-[39px] grid-cols-[296fr_408fr_282fr_320fr] overflow-hidden rounded-[7px] shadow-sm"
        />
        <Tabs
          names={["Police", "Effets de caractère", "Position", "Surlignage", "Plan & numérotation"]}
          selected="Plan & numérotation"
          className="grid h-[39px] grid-cols-[190fr_326fr_210fr_239fr_341fr] overflow-hidden rounded-[7px] shadow-sm"
        />
      </div>

      <div className="mx-[18px] -mt-[20px] min-h-[978px] rounded-[8px] border border-[#dadada] bg-[#e0e0e0] pt-[36px] leading-[32px]">
        <h3 className="pl-[15px] font-bold">Plan</h3>
        <div className="mt-[18px] flex items-center justify-between pr-[24px] pl-[39px]">
          <label htmlFor="level">Niveau de plan :</label>
          <div className="flex h-[40px] w-[610px] rounded-[7px] border border-[#b5b5b5] bg-white">
            <select id="level" className="flex-1 appearance-none bg-transparent pl-[6px] outline-none">
              <option>Niveau 2</option>
            </select>
            <BlueArrows />
          </div>
        </div>

        <div className="relative mt-[30px]">
          <h3 className="pl-[15px] font-bold">Numérotation</h3>
          <div className="mt-[13px] flex items-center justify-between pr-[20px] pl-[39px]">
            <label htmlFor="numbering">Style de numérotation :</label>
            <div className="flex items-center gap-[33px]">
              <div className="rounded-[10px] bg-[#91bdeb] p-[6px]">
                <div className="flex h-[38px] w-[498px] items-stretch rounded-[6px] bg-white">
                  <select id="numbering" className="m-[3px] mr-[24px] flex-1 appearance-none border-2 border-black bg-[#b1d6fd] leading-[28px] outline-none">
                    <option>Numérotation 1</option>
                  </select>
                  <BlueArrows />
                </div>
              </div>
              <button type="button" className={blueButton + " w-[186px]"}>Éditer le style</button>
            </div>
          </div>
          <span className="pointer-events-none absolute -top-[8px] left-[1px] h-[118px] w-[1088px] border-[6px] border-[#ff9527]" />
        </div>

        <h3 className="mt-[25px] pl-[15px] font-bold">Numérotation de lignes</h3>
        <label className="mt-[17px] flex h-[28px] items-center gap-[14px] pl-[43px]">
          <span className="relative flex h-[28px] w-[28px]">
            <input type="checkbox" defaultChecked className="h-[28px] w-[28px] appearance-none rounded-[6px] bg-[#3f99fb]" />
            <svg width="28" height="28" viewBox="0 0 28 28" className="pointer-events-none absolute inset-0" fill="none" stroke="#fff" strokeWidth="3" strokeLinecap="round" aria-hidden="true">
              <path d="M7 15l5 6 8-14" />
            </svg>
          </span>
          Inclure les lignes de ce paragraphe
        </label>
        <label className="mt-[26px] flex h-[28px] items-center gap-[14px] pl-[43px]">
          <input type="checkbox" className="h-[28px] w-[28px] appearance-none rounded-[6px] border border-[#bdbdbd] bg-white" />
          Recommencer avec ce paragraphe
        </label>
        <div className="mt-[26px] flex items-center pl-[63px] text-[#949494]">
          <label htmlFor="start" className="w-[623px]">Démarrer avec :</label>
          <input id="start" defaultValue="1" className="h-[46px] w-[212px] border border-[#cacaca] bg-white pl-[5px] outline-none" />
          <span className="ml-[16px] flex"><Spinner /></span>
        </div>
      </div>

      <div className="flex gap-[22px] px-[31px] pt-[41px] pb-[35px]">
        <button type="button" className={blueButton + " w-[170px]"}>Aide</button>
        <span className="flex-1" />
        <button type="button" className={blueButton + " w-[170px]"}>OK</button>
        <span className="relative flex">
          <button type="button" className={blueButton + " w-[170px]"}>Appliquer</button>
          <span className="pointer-events-none absolute -top-[18px] -left-[12px] h-[76px] w-[196px] border-[6px] border-[#ff9527]" />
        </span>
        <button type="button" className={blueButton + " w-[170px]"}>Annuler</button>
        <button type="button" className={blueButton + " w-[170px]"}>Réinitialiser</button>
        <button type="button" className={blueButton + " w-[170px]"}>Standard</button>
      </div>
    </div>
  );
}

export default function App() {
  return (
    <div className="relative flex min-h-screen flex-col border-t border-b-4 border-t-[#5f6e72] border-b-[#161b20] bg-[#f6f6f6] font-['Liberation_Sans',sans-serif] text-black">
      <TitleBar />
      <Toolbars />
      <div className="flex flex-1">
        <Document />
        <Sidebar />
      </div>
      <StatusBar />
      <Dialog />
    </div>
  );
}
